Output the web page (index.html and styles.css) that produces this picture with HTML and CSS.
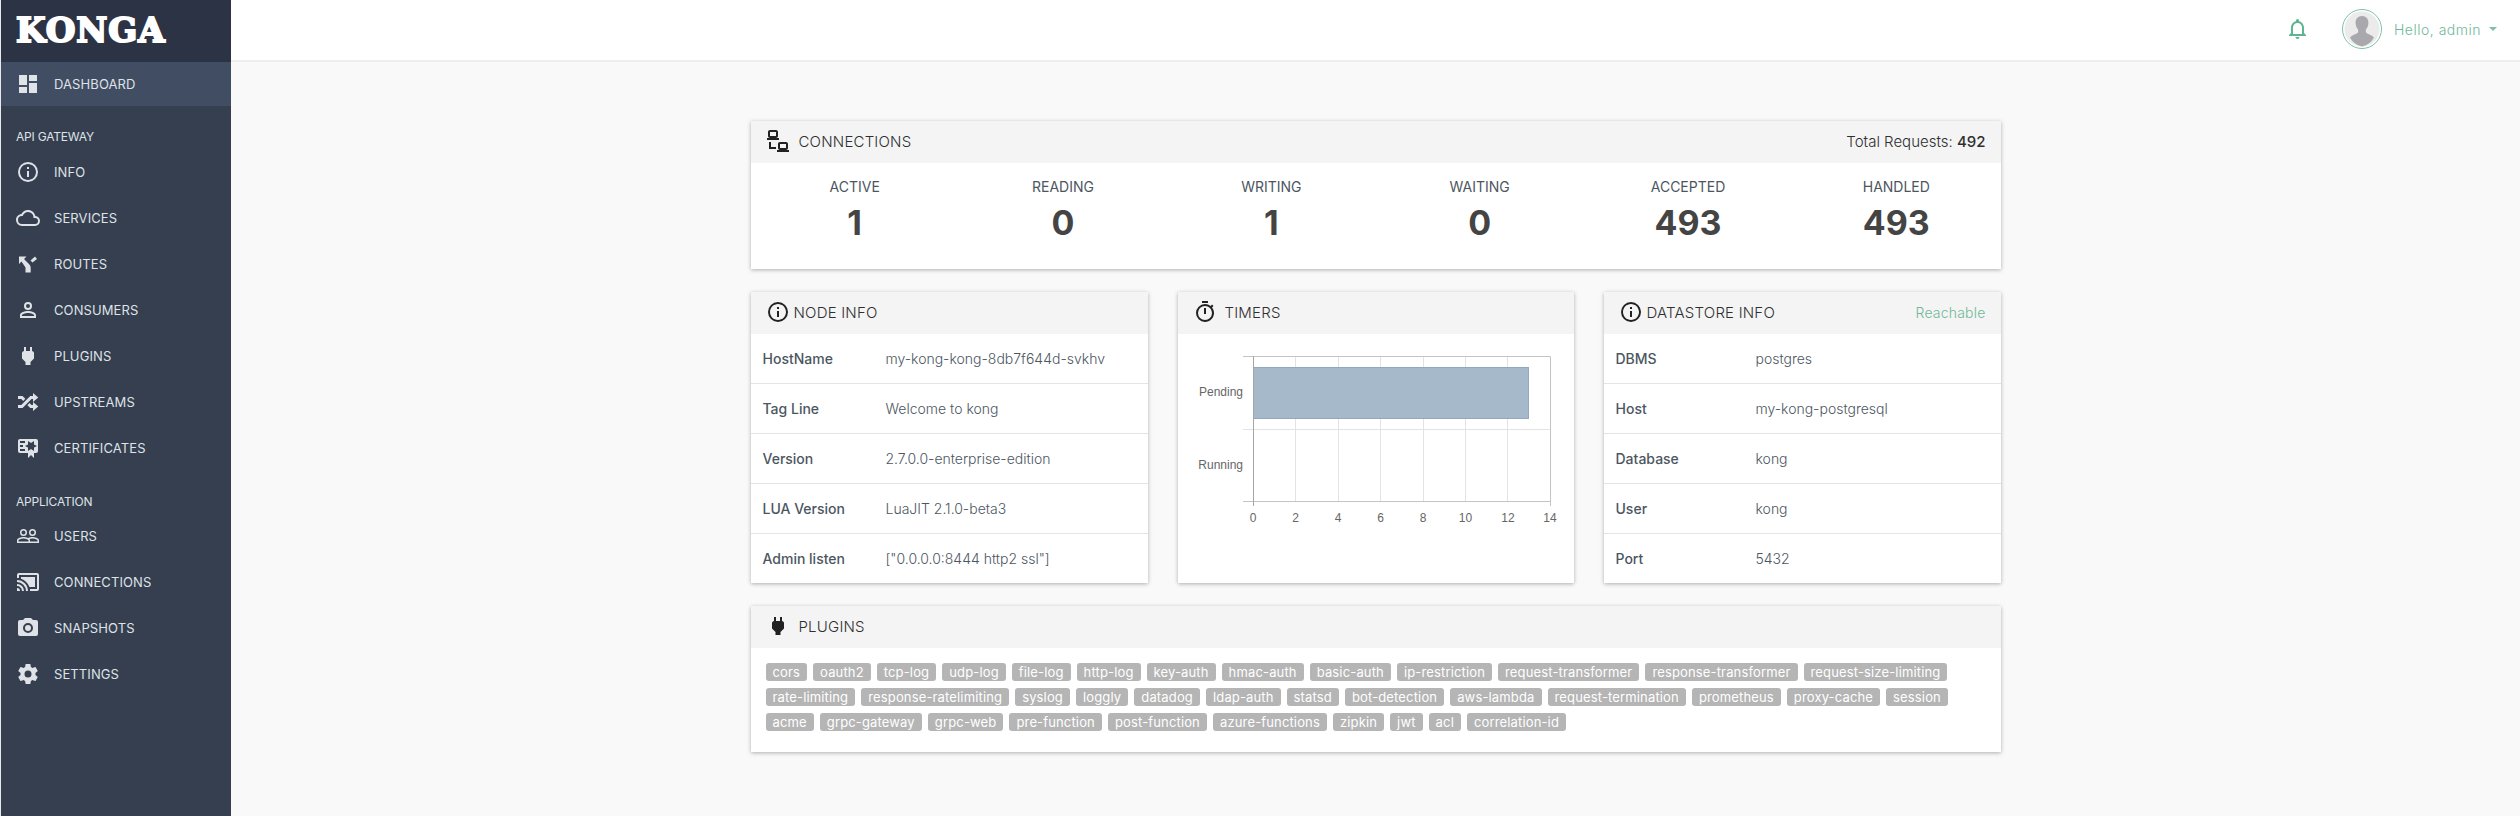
FILE: index.html
```html
<!DOCTYPE html>
<html lang="en">
<head>
    <meta charset="UTF-8">
    <title>Konga</title>
    <link rel="stylesheet" href="styles.css">
</head>
<body>
  <svg class="defs" width="0" height="0">
    <symbol id="i-dashboard" viewBox="0 0 24 24"><path d="M13,3V9H21V3M13,21H21V11H13M3,21H11V15H3M3,13H11V3H3V13Z"/></symbol>
    <symbol id="i-info" viewBox="0 0 24 24"><path d="M11,9H13V7H11M12,20C7.59,20 4,16.41 4,12C4,7.59 7.59,4 12,4C16.41,4 20,7.59 20,12C20,16.41 16.41,20 12,20M12,2A10,10 0 0,0 2,12A10,10 0 0,0 12,22A10,10 0 0,0 22,12A10,10 0 0,0 12,2M11,17H13V11H11V17Z"/></symbol>
    <symbol id="i-cloud" viewBox="0 0 24 24"><path d="M19,18H6A4,4 0 0,1 2,14A4,4 0 0,1 6,10H6.71C7.37,7.69 9.5,6 12,6A5.5,5.5 0 0,1 17.5,11.5V12H19A3,3 0 0,1 22,15A3,3 0 0,1 19,18M19.35,10.03C18.67,6.59 15.64,4 12,4C9.11,4 6.6,5.64 5.35,8.03C2.34,8.36 0,10.9 0,14A6,6 0 0,0 6,20H19A5,5 0 0,0 24,15C24,12.36 21.95,10.22 19.35,10.03Z"/></symbol>
    <symbol id="i-routes" viewBox="0 0 24 24"><path d="M3,4.500H10.500L8,7L13,12Q14.700,13.700 14.700,15.500V20.500H9.500V15.500L5.500,9.500L3,12Z"/><path d="M14.500,8.500L19,4.500L21,7L16.500,10.500Z"/></symbol>
    <symbol id="i-person" viewBox="0 0 24 24"><path d="M12,4A4,4 0 0,1 16,8A4,4 0 0,1 12,12A4,4 0 0,1 8,8A4,4 0 0,1 12,4M12,6A2,2 0 0,0 10,8A2,2 0 0,0 12,10A2,2 0 0,0 14,8A2,2 0 0,0 12,6M12,13C14.67,13 20,14.33 20,17V20H4V17C4,14.33 9.33,13 12,13M12,14.9C9.03,14.9 5.9,16.36 5.9,17V18.1H18.1V17C18.1,16.36 14.97,14.9 12,14.9Z"/></symbol>
    <symbol id="i-plug" viewBox="0 0 24 24"><path d="M16,7V3H14V7H10V3H8V7H8C7,7 6,8 6,9V14.5L9.5,18V21H14.5V18L18,14.5V9C18,8 17,7 16,7Z"/></symbol>
    <symbol id="i-shuffle" viewBox="0 0 24 24"><path d="M17,3L22.25,7.5L17,12L22.25,16.5L17,21V18H14.26L11.44,15.18L13.56,13.06L15.5,15H17V12L17,9H15.5L6.5,18H2V15H5.26L14.26,6H17V3M2,6H6.5L9.32,8.82L7.2,10.94L5.26,9H2V6Z"/></symbol>
    <symbol id="i-cert" viewBox="0 0 24 24"><path d="M4,3C2.89,3 2,3.89 2,5V15A2,2 0 0,0 4,17H12V22L15,19L18,22V17H20A2,2 0 0,0 22,15V8L22,6V5A2,2 0 0,0 20,3H16V3H4M12,5L15,7L18,5V8.5L21,10L18,11.5V15L15,13L12,15V11.5L9,10L12,8.5V5M4,5H9V7H4V5M4,9H7V11H4V9M4,13H9V15H4V13Z"/></symbol>
    <symbol id="i-users" viewBox="0 0 24 24"><path d="M16.5,6.5A2,2 0 0,1 18.5,8.5A2,2 0 0,1 16.5,10.5A2,2 0 0,1 14.5,8.5A2,2 0 0,1 16.5,6.5M16.5,12A3.5,3.5 0 0,0 20,8.5A3.5,3.5 0 0,0 16.5,5A3.5,3.5 0 0,0 13,8.5A3.5,3.5 0 0,0 16.5,12M7.5,6.5A2,2 0 0,1 9.5,8.5A2,2 0 0,1 7.5,10.5A2,2 0 0,1 5.5,8.5A2,2 0 0,1 7.5,6.5M7.5,12A3.5,3.5 0 0,0 11,8.5A3.5,3.5 0 0,0 7.5,5A3.5,3.5 0 0,0 4,8.5A3.5,3.5 0 0,0 7.5,12M21.5,17.5H14V16.25C14,15.79 13.8,15.39 13.5,15.03C14.36,14.73 15.44,14.5 16.5,14.5C18.94,14.5 21.5,15.71 21.5,16.25M12.5,17.5H2.5V16.25C2.5,15.71 5.06,14.5 7.5,14.5C9.94,14.5 12.5,15.71 12.5,16.25M16.5,13C15.3,13 13.43,13.34 12,14C10.57,13.33 8.7,13 7.5,13C5.33,13 1,14.08 1,16.25V19H23V16.25C23,14.08 18.67,13 16.5,13Z"/></symbol>
    <symbol id="i-cast" viewBox="0 0 24 24"><path d="M21,3H3C1.89,3 1,3.89 1,5V8H3V5H21V19H14V21H21A2,2 0 0,0 23,19V5C23,3.89 22.1,3 21,3M1,10V12A9,9 0 0,1 10,21H12C12,14.92 7.07,10 1,10M19,7H5V8.63C8.96,9.91 12.09,13.04 13.37,17H19M1,14V16A5,5 0 0,1 6,21H8A7,7 0 0,0 1,14M1,18V21H4A3,3 0 0,0 1,18Z"/></symbol>
    <symbol id="i-camera" viewBox="0 0 24 24"><path d="M4,4H7L9,2H15L17,4H20A2,2 0 0,1 22,6V18A2,2 0 0,1 20,20H4A2,2 0 0,1 2,18V6A2,2 0 0,1 4,4M12,7A5,5 0 0,0 7,12A5,5 0 0,0 12,17A5,5 0 0,0 17,12A5,5 0 0,0 12,7M12,9A3,3 0 0,1 15,12A3,3 0 0,1 12,15A3,3 0 0,1 9,12A3,3 0 0,1 12,9Z"/></symbol>
    <symbol id="i-gear" viewBox="0 0 24 24"><path d="M12,15.5A3.5,3.5 0 0,1 8.5,12A3.5,3.5 0 0,1 12,8.5A3.5,3.5 0 0,1 15.5,12A3.5,3.5 0 0,1 12,15.5M19.43,12.97C19.47,12.65 19.5,12.33 19.5,12C19.5,11.67 19.47,11.34 19.43,11L21.54,9.37C21.73,9.22 21.78,8.95 21.66,8.73L19.66,5.27C19.54,5.05 19.27,4.96 19.05,5.05L16.56,6.05C16.04,5.66 15.5,5.32 14.87,5.07L14.5,2.42C14.46,2.18 14.25,2 14,2H10C9.75,2 9.54,2.18 9.5,2.42L9.13,5.07C8.5,5.32 7.96,5.66 7.44,6.05L4.95,5.05C4.73,4.96 4.46,5.05 4.34,5.27L2.34,8.73C2.21,8.95 2.27,9.22 2.46,9.37L4.57,11C4.53,11.34 4.5,11.67 4.5,12C4.5,12.33 4.53,12.65 4.57,12.97L2.46,14.63C2.27,14.78 2.21,15.05 2.34,15.27L4.34,18.73C4.46,18.95 4.73,19.03 4.95,18.95L7.44,17.94C7.96,18.34 8.5,18.68 9.13,18.93L9.5,21.58C9.54,21.82 9.75,22 10,22H14C14.25,22 14.46,21.82 14.5,21.58L14.87,18.93C15.5,18.67 16.04,18.34 16.56,17.94L19.05,18.95C19.27,19.03 19.54,18.95 19.66,18.73L21.66,15.27C21.78,15.05 21.73,14.78 21.54,14.63L19.43,12.97Z"/></symbol>
    <symbol id="i-timer" viewBox="0 0 24 24"><path d="M12,20A7,7 0 0,1 5,13A7,7 0 0,1 12,6A7,7 0 0,1 19,13A7,7 0 0,1 12,20M19.03,7.39L20.45,5.97C20,5.46 19.55,5 19.04,4.56L17.62,6C16.07,4.74 14.12,4 12,4A9,9 0 0,0 3,13A9,9 0 0,0 12,22C17,22 21,17.97 21,13C21,10.88 20.26,8.93 19.03,7.39M11,14H13V8H11M15,1H9V3H15V1Z"/></symbol>
    <symbol id="i-bell" viewBox="0 0 24 24"><path d="M16,17H7V10.5C7,8 9,6 11.5,6C14,6 16,8 16,10.5M18,16V10.5C18,7.43 15.86,4.86 13,4.18V3.5A1.5,1.5 0 0,0 11.5,2A1.5,1.5 0 0,0 10,3.5V4.18C7.13,4.86 5,7.43 5,10.5V16L3,18V19H20V18M11.5,22A2,2 0 0,0 13.5,20H9.5A2,2 0 0,0 11.5,22Z"/></symbol>
    <symbol id="i-lan" viewBox="0 0 24 24"><path d="M4,1C2.89,1 2,1.89 2,3V7C2,8.11 2.89,9 4,9H1V11H13V9H10C11.11,9 12,8.11 12,7V3C12,1.89 11.11,1 10,1H4M4,3H10V7H4V3M3,13V18L3,20H10V18H5V13H3M14,13C12.89,13 12,13.89 12,15V19C12,20.11 12.89,21 14,21H11V23H23V21H20C21.11,21 22,20.11 22,19V15C22,13.89 21.11,13 20,13H14M14,15H20V19H14V15Z"/></symbol>
  </svg>

  <aside class="sidebar">
    <div class="logo">KONGA</div>
    <a class="nav-item active"><svg class="nav-icon"><use href="#i-dashboard"/></svg>DASHBOARD</a>
    <div class="nav-title first">API GATEWAY</div>
    <a class="nav-item"><svg class="nav-icon"><use href="#i-info"/></svg>INFO</a>
    <a class="nav-item"><svg class="nav-icon"><use href="#i-cloud"/></svg>SERVICES</a>
    <a class="nav-item"><svg class="nav-icon"><use href="#i-routes"/></svg>ROUTES</a>
    <a class="nav-item"><svg class="nav-icon"><use href="#i-person"/></svg>CONSUMERS</a>
    <a class="nav-item"><svg class="nav-icon"><use href="#i-plug"/></svg>PLUGINS</a>
    <a class="nav-item"><svg class="nav-icon"><use href="#i-shuffle"/></svg>UPSTREAMS</a>
    <a class="nav-item"><svg class="nav-icon"><use href="#i-cert"/></svg>CERTIFICATES</a>
    <div class="nav-title">APPLICATION</div>
    <a class="nav-item"><svg class="nav-icon"><use href="#i-users"/></svg>USERS</a>
    <a class="nav-item"><svg class="nav-icon"><use href="#i-cast"/></svg>CONNECTIONS</a>
    <a class="nav-item"><svg class="nav-icon"><use href="#i-camera"/></svg>SNAPSHOTS</a>
    <a class="nav-item"><svg class="nav-icon"><use href="#i-gear"/></svg>SETTINGS</a>
  </aside>

  <div class="main">
    <header class="topbar">
      <svg class="bell"><use href="#i-bell"/></svg>
      <svg class="avatar" viewBox="0 0 40 40">
        <circle cx="20" cy="20" r="19.5" fill="#fff" stroke="#7fc0a6"/>
        <circle cx="20" cy="20" r="17.5" fill="#ebebeb"/>
        <path d="M20 7c-4.2 0-6.6 3-6.4 7 .1 2.600 1 5 2.600 6.800v2.400c-1 1.600-6.300 2.700-8.200 5.300A17.500 17.500 0 0 0 20 37.500a17.500 17.500 0 0 0 12-9c-1.900-2.600-7.200-3.700-8.200-5.300v-2.400c1.600-1.800 2.500-4.200 2.600-6.800.2-4-2.200-7-6.400-7z" fill="#a9a9ad"/>
      </svg>
      <span class="hello">Hello, admin</span>
      <span class="caret"></span>
    </header>

    <div class="content">
      <section class="card">
        <div class="card-head">
          <svg class="head-icon wide"><use href="#i-lan"/></svg>
          <span class="head-title">CONNECTIONS</span>
          <span class="head-right">Total Requests: <b>492</b></span>
        </div>
        <div class="stats">
          <div class="stat"><div class="stat-label">ACTIVE</div><div class="stat-num">1</div></div>
          <div class="stat"><div class="stat-label">READING</div><div class="stat-num">0</div></div>
          <div class="stat"><div class="stat-label">WRITING</div><div class="stat-num">1</div></div>
          <div class="stat"><div class="stat-label">WAITING</div><div class="stat-num">0</div></div>
          <div class="stat"><div class="stat-label">ACCEPTED</div><div class="stat-num">493</div></div>
          <div class="stat"><div class="stat-label">HANDLED</div><div class="stat-num">493</div></div>
        </div>
      </section>

      <div class="card-row">
        <section class="card">
          <div class="card-head">
            <svg class="head-icon"><use href="#i-info"/></svg>
            <span class="head-title">NODE INFO</span>
          </div>
          <div class="info-row"><span class="info-key">HostName</span><span class="info-val">my-kong-kong-8db7f644d-svkhv</span></div>
          <div class="info-row"><span class="info-key">Tag Line</span><span class="info-val">Welcome to kong</span></div>
          <div class="info-row"><span class="info-key">Version</span><span class="info-val">2.7.0.0-enterprise-edition</span></div>
          <div class="info-row"><span class="info-key">LUA Version</span><span class="info-val">LuaJIT 2.1.0-beta3</span></div>
          <div class="info-row"><span class="info-key">Admin listen</span><span class="info-val">["0.0.0.0:8444 http2 ssl"]</span></div>
        </section>

        <section class="card">
          <div class="card-head">
            <svg class="head-icon timer"><use href="#i-timer"/></svg>
            <span class="head-title">TIMERS</span>
          </div>
          <svg class="chart" viewBox="1178 334 396 249" width="396" height="249">
            <g stroke="#e3e3e3" fill="none">
              <path d="M1295.500 356V501M1338.500 356V501M1380.500 356V501M1423.500 356V501M1465.500 356V501M1507.500 356V501"/>
              <path d="M1243 429.500H1550"/>
            </g>
            <g stroke="#c4c4c4" fill="none">
              <path d="M1243 356.500H1550.500V506M1243 501.500H1550.500"/>
            </g>
            <path d="M1253.500 356V506" stroke="#a6a6a6" fill="none"/>
            <rect x="1254" y="367" width="275" height="52" fill="#a6b9cb"/>
            <path d="M1254 367.500H1528.500V418.500H1254" fill="none" stroke="#94a8bb"/>
            <g class="chart-text" text-anchor="end">
              <text x="1243" y="396">Pending</text>
              <text x="1243" y="469">Running</text>
            </g>
            <g class="chart-text" text-anchor="middle">
              <text x="1253" y="522">0</text>
              <text x="1295.500" y="522">2</text>
              <text x="1338" y="522">4</text>
              <text x="1380.500" y="522">6</text>
              <text x="1423" y="522">8</text>
              <text x="1465.500" y="522">10</text>
              <text x="1508" y="522">12</text>
              <text x="1550" y="522">14</text>
            </g>
          </svg>
        </section>

        <section class="card data-card">
          <div class="card-head">
            <svg class="head-icon"><use href="#i-info"/></svg>
            <span class="head-title">DATASTORE INFO</span>
            <span class="head-right reachable">Reachable</span>
          </div>
          <div class="info-row"><span class="info-key">DBMS</span><span class="info-val">postgres</span></div>
          <div class="info-row"><span class="info-key">Host</span><span class="info-val">my-kong-postgresql</span></div>
          <div class="info-row"><span class="info-key">Database</span><span class="info-val">kong</span></div>
          <div class="info-row"><span class="info-key">User</span><span class="info-val">kong</span></div>
          <div class="info-row"><span class="info-key">Port</span><span class="info-val">5432</span></div>
        </section>
      </div>

      <section class="card">
        <div class="card-head">
          <svg class="head-icon wide"><use href="#i-plug"/></svg>
          <span class="head-title">PLUGINS</span>
        </div>
        <div class="tags">
          <div class="tag-row">
            <span class="tag">cors</span><span class="tag">oauth2</span><span class="tag">tcp-log</span><span class="tag">udp-log</span><span class="tag">file-log</span><span class="tag">http-log</span><span class="tag">key-auth</span><span class="tag">hmac-auth</span><span class="tag">basic-auth</span><span class="tag">ip-restriction</span><span class="tag">request-transformer</span><span class="tag">response-transformer</span><span class="tag">request-size-limiting</span>
          </div>
          <div class="tag-row">
            <span class="tag">rate-limiting</span><span class="tag">response-ratelimiting</span><span class="tag">syslog</span><span class="tag">loggly</span><span class="tag">datadog</span><span class="tag">ldap-auth</span><span class="tag">statsd</span><span class="tag">bot-detection</span><span class="tag">aws-lambda</span><span class="tag">request-termination</span><span class="tag">prometheus</span><span class="tag">proxy-cache</span><span class="tag">session</span>
          </div>
          <div class="tag-row">
            <span class="tag">acme</span><span class="tag">grpc-gateway</span><span class="tag">grpc-web</span><span class="tag">pre-function</span><span class="tag">post-function</span><span class="tag">azure-functions</span><span class="tag">zipkin</span><span class="tag">jwt</span><span class="tag">acl</span><span class="tag">correlation-id</span>
          </div>
        </div>
      </section>
    </div>
  </div>
</body>
</html>
```

FILE: styles.css
```css
* {
    box-sizing: border-box;
}
body {
    margin: 0;
    height: 816px;
    display: flex;
    overflow: hidden;
    background-color: #f9f9f9;
    font-family: Inter, "Open Sans", sans-serif;
    font-size: 14px;
    color: #4c5661;
}
.defs {
    position: absolute;
}

/* sidebar */
.sidebar {
    width: 231px;
    flex: none;
    border-left: 1px solid #e6e8eb;
    background-color: #353f50;
    color: #dfe2e6;
}
.logo {
    height: 62px;
    padding-left: 15px;
    background-color: #2c3344;
    font-family: "DejaVu Serif", serif;
    font-size: 34px;
    font-weight: bold;
    line-height: 61px;
    letter-spacing: 1px;
    color: white;
    -webkit-text-stroke: 2px white;
}
.nav-item {
    display: flex;
    align-items: center;
    height: 46px;
    font-size: 13px;
    letter-spacing: 0.1px;
    font-weight: 400;
}
.nav-item.active {
    height: 44px;
    background-color: #414d63;
}
.nav-icon {
    width: 24px;
    height: 24px;
    margin-left: 15px;
    margin-right: 14px;
    fill: currentColor;
    flex: none;
}
.nav-title {
    height: 42px;
    padding: 24px 0 0 15px;
    font-size: 12px;
    line-height: 14px;
    letter-spacing: -0.2px;
}
.nav-title.first {
    height: 43px;
}

/* top bar */
.main {
    flex: 1;
    min-width: 0;
}
.topbar {
    height: 62px;
    display: flex;
    align-items: center;
    justify-content: flex-end;
    padding: 0 23px 2px 0;
    background-color: white;
    border-bottom: 2px solid #eee;
    color: #6fb89a;
}
.bell {
    width: 24px;
    height: 24px;
    margin-right: 32px;
    fill: #5db594;
}
.avatar {
    width: 40px;
    height: 40px;
    margin-right: 12px;
}
.hello {
    font-size: 14px;
    font-weight: 300;
    letter-spacing: 0.5px;
}
.caret {
    margin-left: 8px;
    border-top: 4px solid #7fc0a6;
    border-left: 4px solid transparent;
    border-right: 4px solid transparent;
}

/* cards */
.content {
    width: 1250px;
    margin: 59px auto 0;
    display: flex;
    flex-direction: column;
    gap: 23px;
}
.card {
    background-color: white;
    box-shadow: 0 1px 4px rgba(0, 0, 0, 0.3);
}
.card-row {
    display: grid;
    grid-template-columns: 397px 396px 397px;
    column-gap: 30px;
}
.card-head {
    height: 42px;
    display: flex;
    align-items: center;
    padding: 0 15px 2px;
    background-color: #f4f4f4;
    color: #2f2f2f;
}
.head-icon {
    width: 24px;
    height: 24px;
    fill: #222;
    margin-right: 4px;
    flex: none;
}
.head-icon.wide {
    margin-right: 9px;
}
.head-icon.timer {
    margin-right: 8px;
}
.head-title {
    font-size: 15px;
    font-weight: 300;
    letter-spacing: 0.2px;
}
.head-right {
    margin-left: auto;
    font-size: 15px;
    font-weight: 300;
}
.head-right b {
    font-weight: 500;
}
.head-right.reachable {
    font-size: 14px;
    letter-spacing: 0.2px;
    color: #6fb89a;
}

/* connections */
.stats {
    display: grid;
    grid-template-columns: repeat(6, 1fr);
    height: 106px;
    padding-top: 15px;
    text-align: center;
}
.stat-label {
    font-weight: 400;
    line-height: 18px;
}
.stat-num {
    margin-top: 5px;
    font-size: 34px;
    font-weight: 700;
    line-height: 44px;
    color: #444;
}

/* info tables */
.info-row {
    display: flex;
    align-items: center;
    height: 50px;
    padding: 0 0 1px 12px;
    border-top: 1px solid #e4e4e4;
}
.card-head + .info-row {
    height: 49px;
    padding-bottom: 0;
    border-top: none;
}
.info-key {
    width: 123px;
    font-weight: 500;
}
.data-card .info-key {
    width: 140px;
}
.info-val {
    font-weight: 300;
}
.chart {
    display: block;
}
.chart-text {
    font-family: "Liberation Sans", sans-serif;
    font-size: 12px;
    fill: #666;
}

/* plugins */
.tags {
    height: 104px;
    padding-top: 15px;
    padding-left: 15px;
    display: flex;
    flex-direction: column;
    gap: 7px;
}
.tag-row {
    display: flex;
    gap: 6px;
}
.tag {
    height: 18px;
    padding: 0 7px;
    border-radius: 3px;
    background-color: #b5b5b5;
    color: white;
    font-size: 13px;
    line-height: 18px;
    letter-spacing: 0.15px;
    white-space: nowrap;
}
```
